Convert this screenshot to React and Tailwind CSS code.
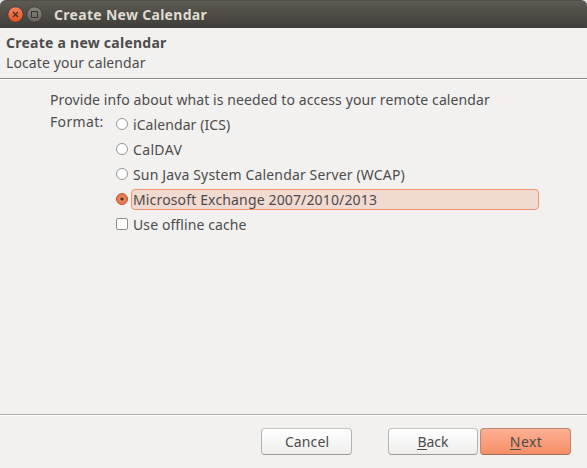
import React from "react";

const FORMATS = [
  { label: "iCalendar (ICS)", spacing: "tracking-[0.08px]" },
  { label: "CalDAV", spacing: "tracking-[0.35px]" },
  { label: "Sun Java System Calendar Server (WCAP)", spacing: "tracking-[0.15px]" },
  { label: "Microsoft Exchange 2007/2010/2013", spacing: "tracking-[0.15px]", selected: true },
];

function TitleBar() {
  return (
    <div className="h-7 bg-[#e4e2e0]">
      <header className="flex h-7 items-center rounded-t-[6px] border-t border-[#504f48] bg-linear-to-b from-[#5d5b52] to-[#3e3d39] pl-[7px]">
        <svg width="37" height="17" viewBox="0 0 37 17" className="block">
          <defs>
            <linearGradient id="close" x2="0" y2="1">
              <stop stopColor="#f58463" />
              <stop offset="1" stopColor="#e2521f" />
            </linearGradient>
            <linearGradient id="max" x2="0" y2="1">
              <stop stopColor="#86847b" />
              <stop offset="1" stopColor="#66655e" />
            </linearGradient>
          </defs>
          <circle cx="8.5" cy="8.5" r="7.7" fill="url(#close)" stroke="#35342f" strokeWidth=".8" />
          <path d="M6 6l5 5M11 6l-5 5" stroke="#4a2a1c" strokeWidth="1.2" />
          <circle cx="27.5" cy="8.5" r="7.7" fill="url(#max)" stroke="#35342f" strokeWidth=".8" />
          <rect x="24.5" y="5.5" width="6" height="6" fill="none" stroke="#35342f" />
        </svg>
        <h1 className="ml-[10px] text-[14px] leading-5 font-bold tracking-[0.3px] whitespace-nowrap text-[#dfdbd2]">
          Create New Calendar
        </h1>
      </header>
    </div>
  );
}

function Radio({ selected }) {
  return (
    <svg width="12" height="12" viewBox="0 0 12 12" className="mb-px block shrink-0">
      <circle cx="6" cy="6" r="5.5" fill={selected ? "#f17e50" : "#fff"} stroke={selected ? "#b9552f" : "#979592"} />
      {selected && <circle cx="6" cy="6" r="3.4" fill="#f29a76" stroke="#d5643a" strokeWidth=".8" />}
      {selected && <circle cx="6" cy="6" r="1.8" fill="#5a3527" />}
    </svg>
  );
}

function Button({ children, className }) {
  return (
    <button className={`h-[27px] rounded-[4px] border text-center text-[14px] leading-[25px] ${className}`}>
      {children}
    </button>
  );
}

const PLAIN = "border-[#b5b3b0] border-t-[#c6c4c1] border-b-[#9b9996] bg-linear-to-b from-white to-[#efeeed]";

function Mnemonic({ children }) {
  return <span className="inline-block h-[17px] border-b border-[#4c4c4c] leading-[17px]">{children}</span>;
}

export default function App() {
  return (
    <main className="flex h-[468px] w-[587px] flex-col overflow-hidden bg-[#f2f1f0] font-['Noto_Sans',sans-serif] text-[14px] leading-5 whitespace-nowrap text-[#4c4c4c]">
      <TitleBar />
      <section className="h-[51px] shrink-0 border-b border-[#878684] pt-[5px] pl-1.5">
        <h2 className="font-bold tracking-[0.25px]">Create a new calendar</h2>
        <p className="tracking-[0.1px]">Locate your calendar</p>
      </section>
      <section className="flex-1 border-t border-white pt-[10px] pl-[50px]">
        <p className="tracking-[0.1px]">Provide info about what is needed to access your remote calendar</p>
        <div className="flex">
          <div className="w-[66px] pt-[2px] tracking-[0.35px]">Format:</div>
          <div className="pt-[2px]">
            {FORMATS.map((f) => (
              <label key={f.label} className="flex h-[25px] items-center">
                <Radio selected={f.selected} />
                <span
                  className={`ml-[3px] h-[21px] w-[408px] rounded-[4px] border pl-px leading-[19px] ${f.spacing} ${
                    f.selected ? "border-[#f0956f] bg-[#f1dad0]" : "border-transparent"
                  }`}
                >
                  {f.label}
                </span>
              </label>
            ))}
            <label className="flex h-[25px] items-center">
              <span className="mb-px size-3 rounded-[2px] border border-[#8f8d8a] bg-white" />
              <span className="ml-[5px] tracking-[0.1px]">Use offline cache</span>
            </label>
          </div>
        </div>
      </section>
      <footer className="flex h-[54px] shrink-0 border-t border-[#adaba9]">
        <div className="flex w-full justify-end border-t border-white pt-3 pr-4">
          <Button className={`mr-9 w-[91px] pl-px tracking-[0.1px] ${PLAIN}`}>Cancel</Button>
          <Button className={`mr-0.5 w-[90px] ${PLAIN}`}>
            <Mnemonic>B</Mnemonic>ack
          </Button>
          <Button className="w-[91px] border-[#b58a78] border-b-[#9c6f5c] bg-linear-to-b from-[#fdb094] to-[#f58e66] pl-px tracking-[0.4px]">
            <Mnemonic>N</Mnemonic>ext
          </Button>
        </div>
      </footer>
    </main>
  );
}
